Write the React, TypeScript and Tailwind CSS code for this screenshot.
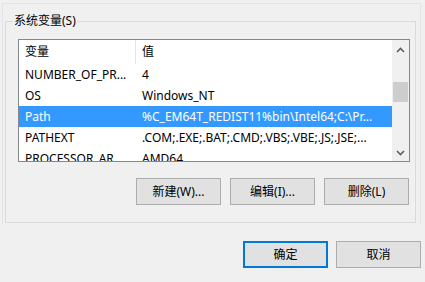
// Environment variables dialog — "系统变量(S)" group with list, action buttons, OK/Cancel.

const font = "font-['Noto_Sans','Noto_Sans_CJK_SC',sans-serif]";

const rows = [
  { name: "NUMBER_OF_PR...", value: "4" },
  { name: "OS", value: "Windows_NT" },
  { name: "Path", value: "%C_EM64T_REDIST11%bin\\Intel64;C:\\Pr...", selected: true },
  { name: "PATHEXT", value: ".COM;.EXE;.BAT;.CMD;.VBS;.VBE;.JS;.JSE;..." },
  { name: "PROCESSOR_AR...", value: "AMD64" },
];

function Chevron({ up }: { up?: boolean }) {
  return (
    <svg width="9" height="6" viewBox="0 0 9 6" className="block" aria-hidden>
      <path
        d={up ? "M1 5 L4.5 1.5 L8 5" : "M1 1 L4.5 4.5 L8 1"}
        fill="none"
        stroke="#606060"
        strokeWidth="1.6"
      />
    </svg>
  );
}

function Button({ label, primary }: { label: string; primary?: boolean }) {
  return (
    <button
      className={`flex h-[27px] w-[85px] items-center justify-center bg-[#e1e1e1] text-[12px] text-black ${
        primary ? "border-2 border-[#0078d7]" : "border border-[#adadad]"
      }`}
    >
      {label}
    </button>
  );
}

export default function App() {
  return (
    <div className={`h-[282px] w-[425px] overflow-hidden bg-[#f0f0f0] pt-[3px] pl-[2px] ${font}`}>
      {/* outer page frame */}
      <div className="h-[221px] w-[419px] border-x border-t border-[#e3e3e3] pt-[17px] pl-[2px]">
        {/* group box */}
        <div className="relative h-[202px] w-[411px] border border-[#dadada]">
          <span className="absolute -top-[10px] left-[7px] bg-[#f0f0f0] px-[1px] text-[12px] leading-[18px] text-black">
            系统变量(S)
          </span>

          <div className="ml-[12px] mt-[17px] flex h-[123px] w-[392px] border border-[#828790] bg-white">
            <div className="flex-1 overflow-hidden">
              <div className="flex h-[24px] text-[12px] text-black">
                <div className="h-[24px] w-[116px] pl-[6px] pt-[3px] leading-[18px]">变量</div>
                <div className="h-[24px] w-px bg-[#e5e5e5]" />
                <div className="pl-[6px] pt-[3px] leading-[18px]">值</div>
              </div>
              {rows.map((r) => (
                <div
                  key={r.name}
                  className={`flex h-[21px] shrink-0 items-center whitespace-nowrap text-[12px] ${
                    r.selected ? "bg-[#3399ff] text-white" : "text-black"
                  }`}
                >
                  <div className="w-[117px] pl-[6px]">{r.name}</div>
                  <div className="pl-[6px]">{r.value}</div>
                </div>
              ))}
            </div>
            {/* scrollbar */}
            <div className="flex w-[17px] flex-col bg-[#f0f0f0]">
              <div className="flex h-[17px] items-center justify-center pt-[2px]">
                <Chevron up />
              </div>
              <div className="flex-1 px-px pt-[25px]">
                <div className="h-[20px] bg-[#cdcdcd]" />
              </div>
              <div className="flex h-[17px] items-center justify-center">
                <Chevron />
              </div>
            </div>
          </div>

          <div className="mt-[16px] flex justify-end gap-[9px] pr-[6px]">
            <Button label="新建(W)..." />
            <Button label="编辑(I)..." />
            <Button label="删除(L)" />
          </div>
        </div>
      </div>

      <div className="mt-[17px] flex justify-end gap-[8px] pr-[4px]">
        <Button label="确定" primary />
        <Button label="取消" />
      </div>
    </div>
  );
}
